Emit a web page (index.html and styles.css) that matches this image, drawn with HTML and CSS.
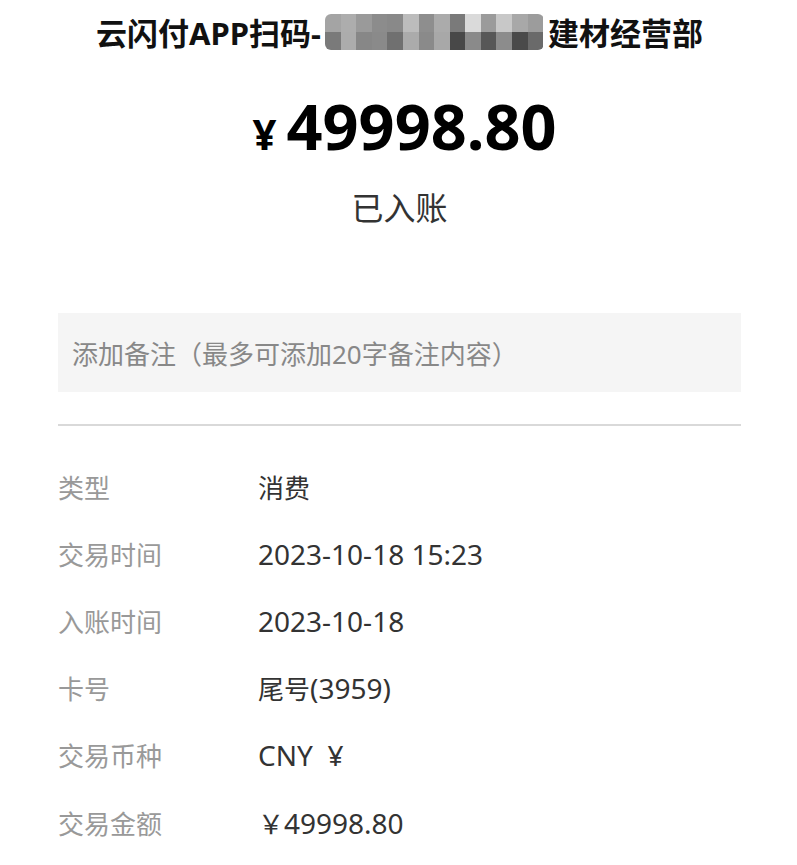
FILE: index.html
```html
<!DOCTYPE html>
<html lang="zh-CN">
<head>
<meta charset="utf-8">
<link rel="stylesheet" href="styles.css">
</head>
<body>
<div class="page">
  <div class="title">云闪付APP扫码-<span class="mosaic"><span style="background:#a4a4a4"></span><span style="background:#adadad"></span><span style="background:#9a9a9a"></span><span style="background:#8c8c8c"></span><span style="background:#898989"></span><span style="background:#bcbcbc"></span><span style="background:#8e8e8e"></span><span style="background:#ababab"></span><span style="background:#7a7a7a"></span><span style="background:#dadada"></span><span style="background:#9b9b9b"></span><span style="background:#c8c8c8"></span><span style="background:#a8a8a8"></span><span style="background:#9c9c9c"></span><span style="background:#7a7a7a"></span><span style="background:#acacac"></span><span style="background:#878787"></span><span style="background:#8a8a8a"></span><span style="background:#707070"></span><span style="background:#ababab"></span><span style="background:#8a8a8a"></span><span style="background:#a8a8a8"></span><span style="background:#484848"></span><span style="background:#8a8a8a"></span><span style="background:#575757"></span><span style="background:#8c8c8c"></span><span style="background:#4a4a4a"></span><span style="background:#6a6a6a"></span></span>建材经营部</div>
  <div class="amount"><span class="yen">¥</span><span class="num">49998.80</span></div>
  <div class="status">已入账</div>
  <div class="remark">添加备注（最多可添加20字备注内容）</div>
  <div class="divider"></div>
  <div class="rows">
    <div class="row"><span class="label">类型</span><span class="value"><span class="cjk">消费</span></span></div>
    <div class="row"><span class="label">交易时间</span><span class="value">2023-10-18 15:23</span></div>
    <div class="row"><span class="label">入账时间</span><span class="value">2023-10-18</span></div>
    <div class="row"><span class="label">卡号</span><span class="value"><span class="cjk">尾号</span>(3959)</span></div>
    <div class="row"><span class="label">交易币种</span><span class="value">CNY&nbsp; ¥</span></div>
    <div class="row"><span class="label">交易金额</span><span class="value"><span class="cjk">￥</span>49998.80</span></div>
  </div>
</div>
</body>
</html>
```

FILE: styles.css
```css
* { box-sizing: border-box; }
html, body { margin: 0; padding: 0; background: #fff; }
body {
  font-family: "Noto Sans", "Noto Sans CJK SC", sans-serif;
  color: #333;
}
.page {
  width: 797px;
  padding: 0 56px 0 58px;
}
.title {
  display: flex;
  justify-content: center;
  align-items: center;
  height: 62px;
  font-size: 31px;
  font-weight: 700;
  color: #111;
  white-space: nowrap;
}
.mosaic {
  display: inline-grid;
  grid-template-columns: repeat(14, 15.6px);
  grid-template-rows: 18px 18px;
  width: 219px;
  height: 36px;
  border-radius: 6px;
  overflow: hidden;
  margin: 2px 4px 0 4px;
}
.amount {
  display: flex;
  justify-content: center;
  align-items: baseline;
  height: 126px;
  padding-top: 32px;
  padding-left: 10px;
  color: #000;
  font-family: "Noto Sans", sans-serif;
  font-weight: 700;
}
.yen {
  font-size: 42px;
  margin-right: 10px;
}
.num {
  font-size: 63px;
  line-height: 1;
}
.status {
  text-align: center;
  font-size: 32px;
  line-height: 40px;
  color: #333;
}
.remark {
  margin-top: 85px;
  height: 79px;
  background: #f5f5f5;
  display: flex;
  align-items: center;
  padding-left: 14px;
  font-size: 26px;
  color: #888;
}
.divider {
  margin-top: 32px;
  height: 2px;
  background: #d9d9d9;
}
.rows {
  padding-top: 27px;
}
.row {
  display: flex;
  align-items: center;
  height: 67.2px;
  font-size: 26px;
}
.label {
  width: 200px;
  color: #999;
}
.value {
  color: #333;
  font-family: "Noto Sans", "Noto Sans CJK SC", sans-serif;
  font-size: 28px;
  line-height: 38px;
}
.cjk {
  font-family: "Noto Sans CJK SC", sans-serif;
  font-size: 26px;
}
```
